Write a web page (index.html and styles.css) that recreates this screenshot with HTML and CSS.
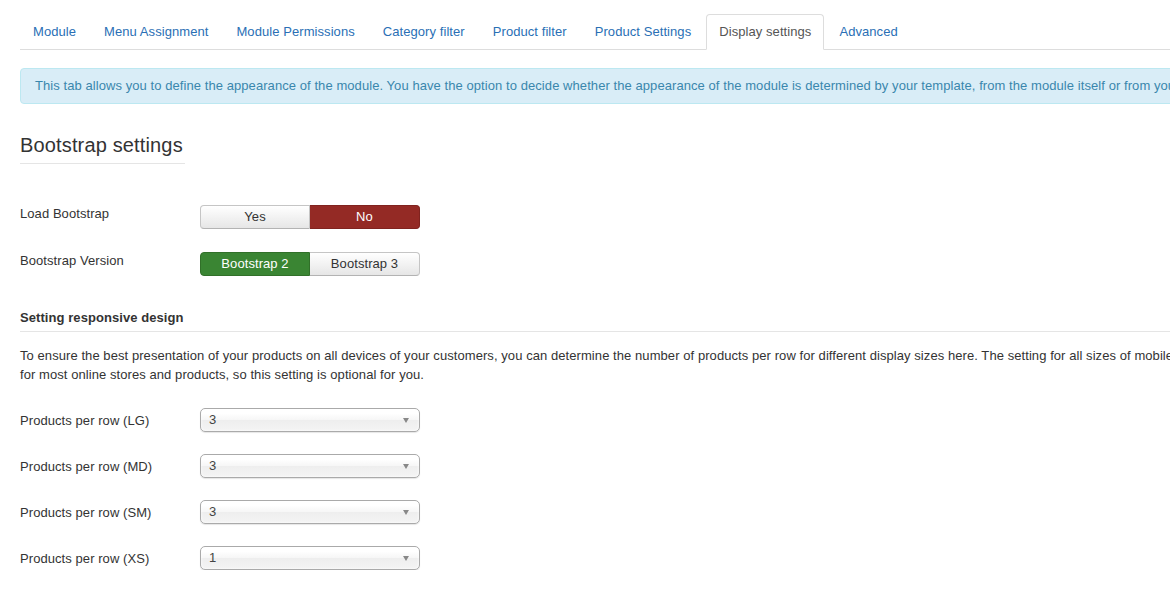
FILE: index.html
```html
<!DOCTYPE html>
<html>
<head>
<meta charset="utf-8">
<link rel="stylesheet" href="styles.css">
</head>
<body>
<div class="page">
  <ul class="tabs">
    <li><a>Module</a></li>
    <li><a>Menu Assignment</a></li>
    <li><a>Module Permissions</a></li>
    <li><a>Category filter</a></li>
    <li><a>Product filter</a></li>
    <li><a>Product Settings</a></li>
    <li class="active"><a>Display settings</a></li>
    <li><a>Advanced</a></li>
  </ul>

  <div class="alert">This tab allows you to define the appearance of the module. You have the option to decide whether the appearance of the module is determined by your template, from the module itself or from your own stylesheet.</div>

  <h3 class="section-title">Bootstrap settings</h3>

  <div class="row">
    <div class="label">Load Bootstrap</div>
    <div class="btn-group">
      <span class="btn">Yes</span>
      <span class="btn btn-danger">No</span>
    </div>
  </div>

  <div class="row">
    <div class="label">Bootstrap Version</div>
    <div class="btn-group">
      <span class="btn btn-success">Bootstrap 2</span>
      <span class="btn">Bootstrap 3</span>
    </div>
  </div>

  <h4 class="subhead">Setting responsive design</h4>

  <p class="desc">To ensure the best presentation of your products on all devices of your customers, you can determine the number of products per row for different display sizes here. The setting for all sizes of mobile devices is already optimized<br>for most online stores and products, so this setting is optional for you.</p>

  <div class="row select-row">
    <div class="label">Products per row (LG)</div>
    <div class="select"><span>3</span><i class="caret"></i></div>
  </div>
  <div class="row select-row">
    <div class="label">Products per row (MD)</div>
    <div class="select"><span>3</span><i class="caret"></i></div>
  </div>
  <div class="row select-row">
    <div class="label">Products per row (SM)</div>
    <div class="select"><span>3</span><i class="caret"></i></div>
  </div>
  <div class="row select-row">
    <div class="label">Products per row (XS)</div>
    <div class="select"><span>1</span><i class="caret"></i></div>
  </div>
</div>
</body>
</html>
```

FILE: styles.css
```css
html, body {
  margin: 0;
  padding: 0;
  background: #fff;
  overflow: hidden;
}
body {
  font-family: "Liberation Sans", Arial, Helvetica, sans-serif;
  font-size: 13px;
  line-height: 18px;
  letter-spacing: 0.07px;
  color: #333;
}
.page {
  width: 1400px;
  padding: 14px 0 0 20px;
}
.tabs {
  list-style: none;
  margin: 0;
  padding: 0;
  display: flex;
  border-bottom: 1px solid #ddd;
}
.tabs li {
  margin-bottom: -1px;
}
.tabs a {
  display: block;
  padding: 8px 12px;
  line-height: 18px;
  margin-right: 2px;
  border: 1px solid transparent;
  border-radius: 4px 4px 0 0;
  color: #2a6fb5;
}
.tabs li.active a {
  color: #555;
  background: #fff;
  border-color: #ddd #ddd transparent #ddd;
}
.alert {
  margin-top: 18px;
  padding: 8px 14px;
  background: #d9edf7;
  border: 1px solid #bce8f1;
  border-radius: 4px;
  color: #3a87ad;
  white-space: nowrap;
  overflow: hidden;
}
.section-title {
  display: inline-block;
  margin: 29px 0 0 0;
  padding-bottom: 6px;
  font-size: 20px;
  line-height: 24px;
  font-weight: normal;
  color: #333;
  border-bottom: 1px solid #e5e5e5;
  padding-right: 2px;
  letter-spacing: 0.15px;
}
.row {
  display: flex;
  align-items: flex-start;
}
.section-title + .row {
  margin-top: 41px;
}
.row + .row {
  margin-top: 23px;
}
.label {
  width: 180px;
  line-height: 18px;
  color: #333;
}
.btn-group {
  display: flex;
}
.btn {
  width: 108px;
  height: 22px;
  line-height: 22px;
  text-align: center;
  border: 1px solid #c5c5c5;
  border-bottom-color: #b3b3b3;
  background: linear-gradient(#ffffff, #e6e6e6);
  color: #333;
}
.btn-group .btn:first-child {
  border-radius: 4px 0 0 4px;
}
.btn-group .btn:last-child {
  border-radius: 0 4px 4px 0;
  border-left: 0;
  width: 109px;
}
.btn-danger {
  background: #942a25;
  border-color: #80231f;
  color: #fff;
}
.btn-success {
  background: #3a8533;
  border-color: #317029;
  color: #fff;
}
.subhead {
  margin: 33px 0 0 0;
  padding-bottom: 4px;
  font-size: 13px;
  line-height: 18px;
  font-weight: bold;
  color: #333;
  border-bottom: 1px solid #e5e5e5;
}
.desc {
  margin: 14px 0 0 0;
  line-height: 19px;
  white-space: nowrap;
}
.desc + .select-row {
  margin-top: 24px;
}
.select-row {
  align-items: center;
}
.select-row + .select-row {
  margin-top: 22px;
}
.select-row .label {
  line-height: 18px;
  padding-top: 1px;
}
.select {
  width: 210px;
  height: 22px;
  padding: 0 0 0 8px;
  border: 1px solid #aaa;
  border-radius: 5px;
  background: linear-gradient(#ffffff 20%, #f6f6f6 50%, #eeeeee 52%, #f4f4f4);
  box-shadow: 0 0 3px #fff inset, 0 1px 1px rgba(0,0,0,0.1);
  display: flex;
  align-items: center;
  justify-content: space-between;
  color: #444;
  line-height: 22px;
}
.caret {
  width: 0;
  height: 0;
  border-left: 3.5px solid transparent;
  border-right: 3.5px solid transparent;
  border-top: 5px solid #888;
  margin-right: 10px;
}
```
